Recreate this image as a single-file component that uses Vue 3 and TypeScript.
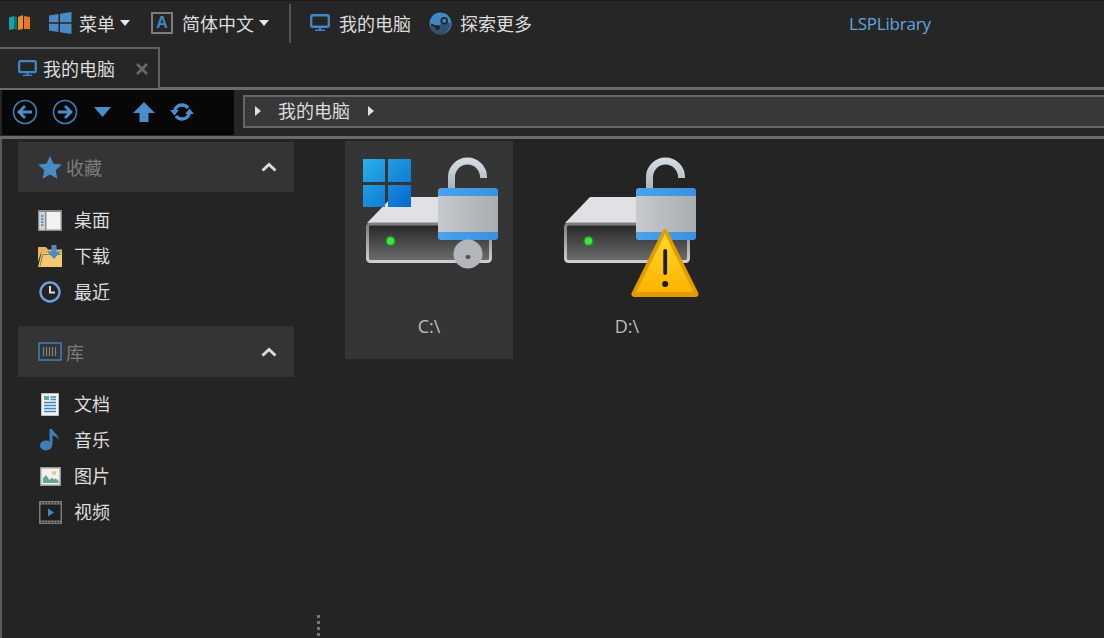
<script setup lang="ts">
interface Item { label: string; icon: string }
interface Group { title: string; icon: string; items: Item[] }

const groups: Group[] = [
  { title: '收藏', icon: 'star', items: [
    { label: '桌面', icon: 'desktop' },
    { label: '下载', icon: 'download' },
    { label: '最近', icon: 'recent' },
  ] },
  { title: '库', icon: 'library', items: [
    { label: '文档', icon: 'doc' },
    { label: '音乐', icon: 'music' },
    { label: '图片', icon: 'picture' },
    { label: '视频', icon: 'video' },
  ] },
]

const drives = [
  { label: 'C:\\', system: true, selected: true },
  { label: 'D:\\', system: false, selected: false },
]
</script>

<template>
  <div class="app">
    <header class="toolbar">
      <svg class="logo" width="22" height="16" viewBox="0 0 22 16">
        <path d="M0 2.5 5 1v13l-5 1z" fill="#16a0a8" />
        <path d="M5 1l3 1v13l-3-1z" fill="#0d6f78" />
        <path d="M9 2l5-2v14l-5 1z" fill="#f08a24" />
        <path d="M15 1l6 1v12l-6 0z" fill="#e8762a" />
      </svg>
      <button class="tool tool-menu">
        <svg width="24" height="24" viewBox="0 0 24 24">
          <path d="M1 4.5 10.5 3v8.3H1zM12 2.8 23.5 1v10.3H12zM1 12.8h9.5V21L1 19.6zM12 12.8h11.500V23L12 21.200z" fill="#4a8bc6" />
        </svg>
        <span>菜单</span>
        <i class="caret"></i>
      </button>
      <button class="tool tool-lang">
        <span class="a-box">A</span>
        <span>简体中文</span>
        <i class="caret"></i>
      </button>
      <span class="sep"></span>
      <button class="tool tool-pc">
        <svg width="20" height="18" viewBox="0 0 20 18">
          <rect x="1.200" y="1.200" width="17.600" height="11.600" rx="1.500" fill="none" stroke="#3f87c6" stroke-width="2.400" />
          <path d="M9 13h2v2.500H9zM5 15.500h10V17H5z" fill="#3f87c6" />
        </svg>
        <span>我的电脑</span>
      </button>
      <button class="tool tool-steam">
        <svg width="23" height="23" viewBox="0 0 23 23">
          <circle cx="11.500" cy="11.500" r="11" fill="#3f87c6" />
          <path d="M0.800 13.500 7 16l5.500-4.500 2-.5 7 0C21.500 17 17 22.500 11.500 22.500 6 22.500 1.800 18.500 0.800 13.500z" fill="#262626" opacity="0.550" />
          <circle cx="15.200" cy="8.800" r="3.800" fill="#262626" />
          <circle cx="15.200" cy="8.800" r="2" fill="#3f87c6" />
          <path d="M2 12.500 9 15.500" stroke="#262626" stroke-width="2" />
          <circle cx="8.500" cy="15.500" r="2.500" fill="#262626" />
        </svg>
        <span>探索更多</span>
      </button>
      <span class="brand">LSPLibrary</span>
    </header>

    <div class="tabs">
      <div class="tab">
        <svg width="19" height="17" viewBox="0 0 20 18">
          <rect x="1.200" y="1.200" width="17.600" height="11.600" rx="1.500" fill="none" stroke="#3f87c6" stroke-width="2.400" />
          <path d="M9 13h2v2.500H9zM5 15.500h10V17H5z" fill="#3f87c6" />
        </svg>
        <span class="lbl">我的电脑</span>
        <svg class="close" width="14" height="14" viewBox="0 0 14 14">
          <path d="M2 2l10 10M12 2 2 12" stroke="#6a6a6a" stroke-width="2.600" fill="none" />
        </svg>
      </div>
    </div>

    <nav class="navrow">
      <div class="navbtns">
        <svg width="26" height="26" viewBox="0 0 26 26" class="nb-back">
          <circle cx="13" cy="13" r="11.500" fill="none" stroke="#3f7fb8" stroke-width="1.600" />
          <path d="M13 7 7 13l6 6M7.500 13H20" fill="none" stroke="#4a8fcc" stroke-width="2.800" />
        </svg>
        <svg width="26" height="26" viewBox="0 0 26 26" class="nb-fwd">
          <circle cx="13" cy="13" r="11.500" fill="none" stroke="#3f7fb8" stroke-width="1.600" />
          <path d="M13 7l6 6-6 6M18.500 13H6" fill="none" stroke="#4a8fcc" stroke-width="2.800" />
        </svg>
        <svg width="17" height="10" viewBox="0 0 17 10" class="nb-down">
          <path d="M0 0h17L8.500 10z" fill="#4a8fcc" />
        </svg>
        <svg width="22" height="20" viewBox="0 0 22 20" class="nb-up">
          <path d="M11 0 22 11h-6.500v9h-9v-9H0z" fill="#4a8fcc" />
        </svg>
        <svg width="24" height="20" viewBox="0 0 24 20" class="nb-refresh">
          <path d="M4.500 9.500C5 5.500 8 3 12 3c2.500 0 4.500 1 6 3M19.500 10.500C19 14.500 16 17 12 17c-2.500 0-4.500-1-6-3" fill="none" stroke="#4a8fcc" stroke-width="3.400" />
          <path d="M0 8h9l-4.500 5.500zM24 12h-9l4.500-5.500z" fill="#4a8fcc" />
        </svg>
      </div>
      <div class="address">
        <i class="tri"></i>
        <span class="addr-text">我的电脑</span>
        <i class="tri"></i>
      </div>
    </nav>

    <div class="body">
      <aside class="sidebar">
        <section v-for="g in groups" :key="g.title" class="group">
          <div class="group-head">
            <svg v-if="g.icon === 'star'" width="24" height="23" viewBox="0 0 24 23">
              <path d="M12 0l3.500 7.700 8.500.9-6.300 5.700 1.700 8.400L12 18.500l-7.400 4.200 1.700-8.400L0 8.600l8.500-.9z" fill="#4a8bc6" />
            </svg>
            <svg v-else width="24" height="19" viewBox="0 0 24 19">
              <rect x="1" y="1" width="22" height="17" fill="none" stroke="#3f7fb8" stroke-width="1.500" />
              <path d="M5.500 5v9M8.500 5v9M11.500 5v9M14.500 5v9M17.500 5v9" stroke="#808080" stroke-width="1.200" />
            </svg>
            <span class="group-title">{{ g.title }}</span>
            <svg class="chevron" width="16" height="10" viewBox="0 0 16 10">
              <path d="M1.500 8.500 8 2.500l6.500 6" fill="none" stroke="#dcdcdc" stroke-width="3" />
            </svg>
          </div>
          <ul class="items">
            <li v-for="it in g.items" :key="it.label" class="item">
              <span class="item-icon">
                <svg v-if="it.icon === 'desktop'" width="24" height="21" viewBox="0 0 24 21">
                  <rect width="24" height="21" fill="#8c8c8c" />
                  <rect x="1.500" y="2" width="21" height="17.500" fill="#f2f2f2" />
                  <rect x="7" y="2" width="1.500" height="17.500" fill="#8c8c8c" />
                  <rect x="1.500" y="2" width="5.500" height="17.500" fill="#cfd3d6" />
                  <path d="M3 6h2.500M3 9h2.500M3 12h2.500M3 15h2.500" stroke="#3f87c6" stroke-width="1.300" />
                </svg>
                <svg v-else-if="it.icon === 'download'" width="24" height="22" viewBox="0 0 24 22">
                  <path d="M0 2h8l2 2.500h14V8H3L0 17z" fill="#e6b65e" />
                  <path d="M0 22 3.500 8H24v14z" fill="#f3c873" />
                  <path d="M2 21 4.800 9.500H23" fill="none" stroke="#2a2a2a" stroke-width="1" opacity="0.500" />
                  <path d="M13.500 0h5v6.500H23L16 14 9 6.500h4.500z" fill="#4a8bc6" />
                </svg>
                <svg v-else-if="it.icon === 'recent'" width="22" height="22" viewBox="0 0 22 22">
                  <circle cx="11" cy="11" r="9.500" fill="none" stroke="#6f9fdc" stroke-width="2.400" />
                  <path d="M11 5v6.500h5" fill="none" stroke="#dcdcdc" stroke-width="2" />
                </svg>
                <svg v-else-if="it.icon === 'doc'" width="18" height="23" viewBox="0 0 18 23">
                  <rect width="18" height="23" fill="#f2f2f2" stroke="#8c8c8c" />
                  <rect x="3" y="3" width="5" height="4" fill="#6aa58a" />
                  <path d="M9.500 4h5.500M9.500 6.500h5.500M3 9.500h12M3 12.500h12M3 15.500h12M3 18.500h12" stroke="#3f87c6" stroke-width="1.400" />
                </svg>
                <svg v-else-if="it.icon === 'music'" width="20" height="22" viewBox="0 0 20 22">
                  <ellipse cx="6" cy="16.500" rx="6" ry="5" fill="#3f7fb8" />
                  <path d="M9.500 16V0h2.500c1 3.500 6.500 5 6.500 11-1-2.500-3.500-4-6-4.500V16z" fill="#3f7fb8" />
                </svg>
                <svg v-else-if="it.icon === 'picture'" width="21" height="19" viewBox="0 0 21 19">
                  <rect width="21" height="19" fill="#9a9a9a" />
                  <rect x="1.500" y="1.500" width="18" height="16" fill="#f2f2f2" />
                  <circle cx="14" cy="6" r="2" fill="#eec266" />
                  <path d="M3 16v-5l3-3 3.500 5 2.500-2.500 2 2 1.500-1 3 2v2.500z" fill="#6aa58a" />
                </svg>
                <svg v-else width="23" height="23" viewBox="0 0 23 23">
                  <rect width="23" height="23" fill="#7a7a7a" />
                  <rect x="1.500" y="3.500" width="20" height="16" fill="#1f1f1f" />
                  <path d="M2 1.800h19M2 21.300h19" stroke="#222" stroke-width="1.300" stroke-dasharray="1.500 1.500" />
                  <path d="M9 7.500l6 4-6 4z" fill="#3f87c6" />
                </svg>
              </span>
              <span class="lbl">{{ it.label }}</span>
            </li>
          </ul>
        </section>
      </aside>

      <div class="splitter">
        <i></i><i></i><i></i><i></i>
      </div>

      <main class="files">
        <div v-for="d in drives" :key="d.label" class="tile" :class="{ selected: d.selected }">
          <svg class="drive" width="168" height="170" viewBox="0 0 168 170">
            <defs>
              <linearGradient id="front" x1="0" y1="0" x2="0" y2="1">
                <stop offset="0" stop-color="#262626" />
                <stop offset="1" stop-color="#6e6e6e" />
              </linearGradient>
              <linearGradient id="frame" x1="0" y1="0" x2="0" y2="1">
                <stop offset="0" stop-color="#7e7e7e" />
                <stop offset="1" stop-color="#cfcfcf" />
              </linearGradient>
              <linearGradient id="lockb" x1="0" y1="0" x2="1" y2="0">
                <stop offset="0" stop-color="#c6c9cd" />
                <stop offset="1" stop-color="#a8adb2" />
              </linearGradient>
              <linearGradient id="blue" x1="0" y1="0" x2="1" y2="0">
                <stop offset="0" stop-color="#4aa3ec" />
                <stop offset="1" stop-color="#3a90e0" />
              </linearGradient>
              <linearGradient id="shackle" x1="0" y1="0" x2="0" y2="1">
                <stop offset="0" stop-color="#d4dae0" />
                <stop offset="1" stop-color="#aab2ba" />
              </linearGradient>
              <linearGradient id="win" gradientUnits="userSpaceOnUse" x1="18" y1="18" x2="66" y2="66">
                <stop offset="0" stop-color="#2bb0ea" />
                <stop offset="1" stop-color="#0668cc" />
              </linearGradient>
              <linearGradient id="warn" x1="0" y1="0" x2="0" y2="1">
                <stop offset="0" stop-color="#ffd82e" />
                <stop offset="1" stop-color="#fbb400" />
              </linearGradient>
            </defs>
            <path d="M22 82 47 56h63v26z" fill="#dfe1e4" />
            <rect x="22.500" y="83" width="123" height="37.500" rx="3" fill="url(#front)" stroke="url(#frame)" stroke-width="3" />
            <circle cx="45.500" cy="100" r="5.500" fill="#1aa31a" opacity="0.550" />
            <circle cx="45.500" cy="100" r="3.800" fill="#3ce83c" />
            <path d="M106.500 48V36A16 16 0 0 1 138.500 36V37" fill="none" stroke="url(#shackle)" stroke-width="7" />
            <rect x="93" y="47" width="60" height="52" rx="4" fill="url(#lockb)" />
            <path d="M93 55v-4a4 4 0 0 1 4-4h52a4 4 0 0 1 4 4v4zM93 91h60v4a4 4 0 0 1-4 4H97a4 4 0 0 1-4-4z" fill="url(#blue)" />
            <template v-if="d.system">
              <circle cx="123" cy="113" r="14.500" fill="#b2b6ba" />
              <rect x="120.500" y="114" width="5" height="4" rx="2" fill="#555" />
              <rect x="18" y="18" width="22" height="23" fill="url(#win)" />
              <rect x="43" y="18" width="23" height="23" fill="url(#win)" />
              <rect x="18" y="44" width="22" height="22" fill="url(#win)" />
              <rect x="43" y="44" width="23" height="22" fill="url(#win)" />
            </template>
            <template v-else>
              <path d="M122 91.500 91.500 153h61z" fill="url(#warn)" stroke="#e39c00" stroke-width="6" stroke-linejoin="round" />
              <path d="M122 93 93.500 151h57z" fill="url(#warn)" />
              <rect x="120.300" y="108" width="3.800" height="26" rx="1.900" fill="#1c1c1c" />
              <circle cx="122.200" cy="143" r="3" fill="#1c1c1c" />
            </template>
          </svg>
          <span class="tile-label">{{ d.label }}</span>
        </div>
      </main>
    </div>
  </div>
</template>

<style scoped>
.app {
  width: 1104px;
  height: 638px;
  overflow: hidden;
  display: flex;
  flex-direction: column;
  background: #242424;
  color: #dcdcdc;
  font-family: "Noto Sans CJK SC", "Noto Sans", sans-serif;
  font-size: 18px;
  line-height: 24px;
}
.lbl { padding-bottom: 2px; }
.toolbar {
  height: 47px;
  flex: none;
  display: flex;
  align-items: center;
  background: #262626;
  padding: 0 0 2px 9px;
  border-top: 1px solid #1c1c1c;
  box-sizing: border-box;
}
.logo { flex: none; }
.tool {
  display: flex;
  align-items: center;
  padding: 0;
  border: 0;
  background: none;
  color: inherit;
  font: inherit;
}
.tool-menu { margin-left: 17px; gap: 7px; }
.tool-lang { margin-left: 21px; gap: 7px; }
.tool-lang .a-box { margin-right: 2px; }
.tool-pc { margin-left: 19px; gap: 9px; }
.tool-steam { margin-left: 18px; gap: 8px; }
.caret {
  width: 0;
  height: 0;
  margin-left: -2px;
  border-left: 5px solid transparent;
  border-right: 5px solid transparent;
  border-top: 6px solid #e8e8e8;
}
.a-box {
  width: 22px;
  height: 22px;
  box-sizing: border-box;
  border: 2px solid #7d7d7d;
  color: #3f87c6;
  display: flex;
  align-items: center;
  justify-content: center;
  font: 700 16px "Liberation Sans", sans-serif;
}
.sep {
  width: 2px;
  height: 39px;
  margin-left: 20px;
  background: #555;
}
.brand {
  margin-left: 317px;
  padding-top: 2px;
  color: #62a5e0;
  font-family: "Open Sans", sans-serif;
  font-size: 17px;
  letter-spacing: -0.200px;
}
.tabs {
  height: 40px;
  flex: none;
  background: #262626;
  display: flex;
}
.tab {
  width: 160px;
  height: 41px;
  box-sizing: border-box;
  border: 2px solid #606060;
  border-left: 0;
  border-bottom: 0;
  background: #262626;
  display: flex;
  align-items: center;
  padding-left: 18px;
  position: relative;
  z-index: 1;
}
.tab .lbl { margin-left: 6px; }
.close { margin-left: 20px; }
.navrow {
  height: 52px;
  flex: none;
  box-sizing: border-box;
  border-top: 3px solid #6a6a6a;
  border-bottom: 3px solid #6a6a6a;
  background: #262626;
  display: flex;
  align-items: stretch;
  padding-left: 2px;
}
.navbtns {
  width: 232px;
  background: #070707;
  display: flex;
  align-items: center;
  margin-bottom: 1px;
  padding: 0 0 2px 10px;
  box-sizing: border-box;
}
.nb-fwd { margin-left: 14px; }
.nb-down { margin-left: 16px; }
.nb-up { margin-left: 22px; }
.nb-refresh { margin-left: 15px; }
.address {
  flex: 1;
  margin: 5px -4px 8px 9px;
  box-sizing: border-box;
  border: 2px solid #666;
  background: #383838;
  display: flex;
  align-items: center;
  padding-left: 10px;
}
.addr-text { margin: 0 18px 0 17px; padding-bottom: 4px; }
.tri {
  width: 0;
  height: 0;
  margin-bottom: 2px;
  border-top: 5px solid transparent;
  border-bottom: 5px solid transparent;
  border-left: 6px solid #e0e0e0;
}
.body {
  flex: 1;
  min-height: 0;
  display: flex;
  border-left: 2px solid #5a5a5a;
}
.sidebar {
  width: 276px;
  margin-left: 16px;
  padding-top: 3px;
  flex: none;
}
.group { margin-bottom: 16px; }
.group-head {
  height: 51px;
  background: #343434;
  display: flex;
  align-items: center;
  padding-left: 20px;
  color: #7c7c7c;
  box-sizing: border-box;
}
.group:first-child .group-head { height: 50px; }
.group:first-child .items { margin-top: 10px; }
.group-title { margin-left: 4px; }
.chevron { margin-left: auto; margin-right: 17px; }
.items {
  list-style: none;
  margin: 9px 0 0;
  padding: 0;
}
.item {
  height: 36px;
  display: flex;
  align-items: center;
}
.item-icon {
  width: 24px;
  margin-left: 20px;
  margin-right: 12px;
  display: flex;
  align-items: center;
  justify-content: center;
}
.splitter {
  width: 51px;
  flex: none;
  display: flex;
  flex-direction: column;
  align-items: center;
  justify-content: flex-end;
  gap: 3px;
  padding-right: 3px;
  box-sizing: border-box;
  padding-bottom: 2px;
}
.splitter i {
  width: 3px;
  height: 3px;
  background: #777;
}
.files {
  display: flex;
  gap: 30px;
  align-items: flex-start;
  padding-top: 2px;
}
.tile {
  width: 168px;
  height: 218px;
  display: flex;
  flex-direction: column;
  align-items: center;
}
.tile.selected { background: #353535; }
.drive { flex: none; }
.tile-label {
  margin-top: 3px;
  font-family: "Open Sans", sans-serif;
  font-size: 18px;
  color: #bdbdbd;
}
</style>
